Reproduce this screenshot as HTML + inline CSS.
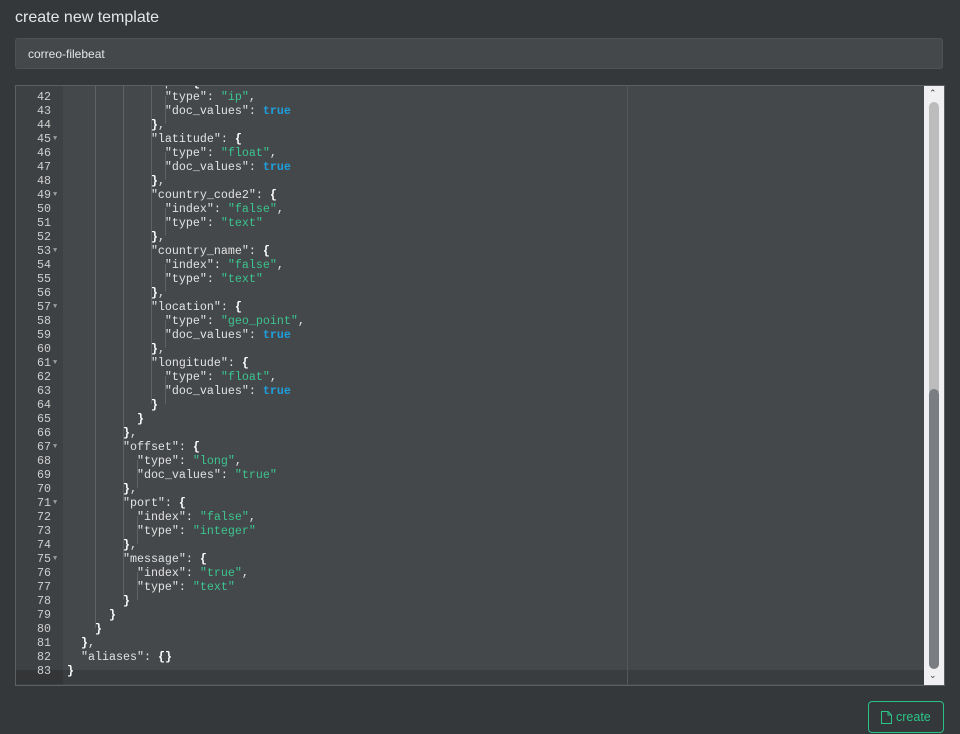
<!DOCTYPE html>
<html><head><meta charset="utf-8"><style>
body{margin:0;width:960px;height:734px;background:#35383b;font-family:"Liberation Sans",sans-serif;overflow:hidden;position:relative}
.t{position:absolute;left:15px;top:9px;font-size:16px;color:#e6e6e6}
.in{position:absolute;left:15px;top:38px;width:928px;height:31px;background:#45484b;border:1px solid #4f5255;border-radius:3px;box-sizing:border-box}
.in span{position:absolute;left:12px;top:8px;font-size:12px;color:#e4e4e4}
.ed{position:absolute;left:15px;top:85px;width:930px;height:601px;border:1px solid #5c5f62;box-sizing:border-box;background:#45484b;overflow:hidden}
.gut{position:absolute;left:0;top:0;width:47px;height:100%;background:#3e4144}
.ln{position:absolute;left:0;width:909px;height:14px;font-family:"Liberation Mono",monospace;font-size:11.67px;line-height:14px;color:#e2e2e2;white-space:pre}
.num{position:absolute;left:0;width:35px;text-align:right;color:#cfcfcf}
.fa{position:absolute;left:37px;top:0;font-size:7px;color:#999}
.code{position:absolute;left:51px}
.s{color:#3cc48e}.k{color:#1e9fdc;font-weight:bold}.b{font-weight:bold;color:#fff}
.g{position:absolute;width:0;border-left:1px solid #5f6265}
.sb{position:absolute;left:908px;top:0;width:20px;height:599px;background:#f0f0f2}
</style></head><body>
<div class="t">create new template</div>
<div class="in"><span>correo-filebeat</span></div>
<div class="ed">
<div class="gut"></div>
<div style="position:absolute;left:0;top:584px;width:908px;height:14px;background:#3a3d40"></div>
<div style="position:absolute;left:0;top:584px;width:47px;height:14px;background:#333537"></div>
<div style="position:absolute;left:611px;top:0;height:100%;border-left:1px solid #55585b"></div>
<div class="g" style="left:79px;top:0;height:542px"></div>
<div class="g" style="left:107px;top:0;height:514px"></div>
<div class="g" style="left:135px;top:0;height:318px"></div>
<div class="g" style="left:149px;top:10px;height:28px"></div>
<div class="g" style="left:149px;top:66px;height:28px"></div>
<div class="g" style="left:149px;top:122px;height:28px"></div>
<div class="g" style="left:149px;top:178px;height:28px"></div>
<div class="g" style="left:149px;top:234px;height:28px"></div>
<div class="g" style="left:149px;top:290px;height:28px"></div>
<div class="g" style="left:121px;top:374px;height:28px"></div>
<div class="g" style="left:121px;top:430px;height:28px"></div>
<div class="g" style="left:121px;top:486px;height:28px"></div>
<div id="L"></div>
<div class="sb">
<div style="position:absolute;left:5px;top:2px;font-size:9px;color:#444">&#8963;</div>
<div style="position:absolute;left:5px;top:16px;width:10px;height:290px;background:#bcbcbc;border-radius:5px 5px 0 0"></div>
<div style="position:absolute;left:5px;top:303px;width:10px;height:280px;background:#7a7d82;border-radius:5px"></div>
<div style="position:absolute;left:5px;top:584px;font-size:9px;color:#444">&#8964;</div>
</div>
</div>
<div style="position:absolute;left:868px;top:701px;width:76px;height:32px;border:1px solid #2bbf85;border-radius:4px;box-sizing:border-box;color:#2bc587;font-size:12.5px">
<svg style="position:absolute;left:12px;top:9px" width="11" height="13" viewBox="0 0 11 13"><path d="M0.5 0.5h6.5l3.5 3.5v8.5h-10z M7 0.5v3.5h3.5" fill="none" stroke="#2bc587"/></svg>
<span style="position:absolute;left:27px;top:8px">create</span></div>
<script>
(function(){
var d=[[12,'"ip": {',1],[14,'"type": "ip",'],[14,'"doc_values": true'],[12,'},'],[12,'"latitude": {',1],[14,'"type": "float",'],[14,'"doc_values": true'],[12,'},'],[12,'"country_code2": {',1],[14,'"index": "false",'],[14,'"type": "text"'],[12,'},'],[12,'"country_name": {',1],[14,'"index": "false",'],[14,'"type": "text"'],[12,'},'],[12,'"location": {',1],[14,'"type": "geo_point",'],[14,'"doc_values": true'],[12,'},'],[12,'"longitude": {',1],[14,'"type": "float",'],[14,'"doc_values": true'],[12,'}'],[10,'}'],[8,'},'],[8,'"offset": {',1],[10,'"type": "long",'],[10,'"doc_values": "true"'],[8,'},'],[8,'"port": {',1],[10,'"index": "false",'],[10,'"type": "integer"'],[8,'},'],[8,'"message": {',1],[10,'"index": "true",'],[10,'"type": "text"'],[8,'}'],[6,'}'],[4,'}'],[2,'},'],[2,'"aliases": {}'],[0,'}']];
function v(x){
  var out='',re=/("[^"]*")|(\btrue\b)|([{}])|([^"{}t]+|t)/g,m;
  while((m=re.exec(x))){
    if(m[1])out+='<span class="s">'+m[1]+'</span>';
    else if(m[2])out+='<span class="k">true</span>';
    else if(m[3])out+='<span class="b">'+m[3]+'</span>';
    else out+=m[4];
  }
  return out;
}
function fmt(s){var m=s.match(/^("[^"]*")(: )(.*)$/);return m?m[1]+m[2]+v(m[3]):v(s);}
var h='';
for(var i=0;i<d.length;i++){var n=41+i,tp=-10+i*14;
h+='<div class="ln" style="top:'+tp+'px"><span class="num">'+n+'</span>'+(d[i][2]?'<span class="fa">&#9660;</span>':'')+'<span class="code">'+' '.repeat(d[i][0])+fmt(d[i][1])+'</span></div>';}
document.getElementById('L').innerHTML=h;
})();
</script>
</body></html>
